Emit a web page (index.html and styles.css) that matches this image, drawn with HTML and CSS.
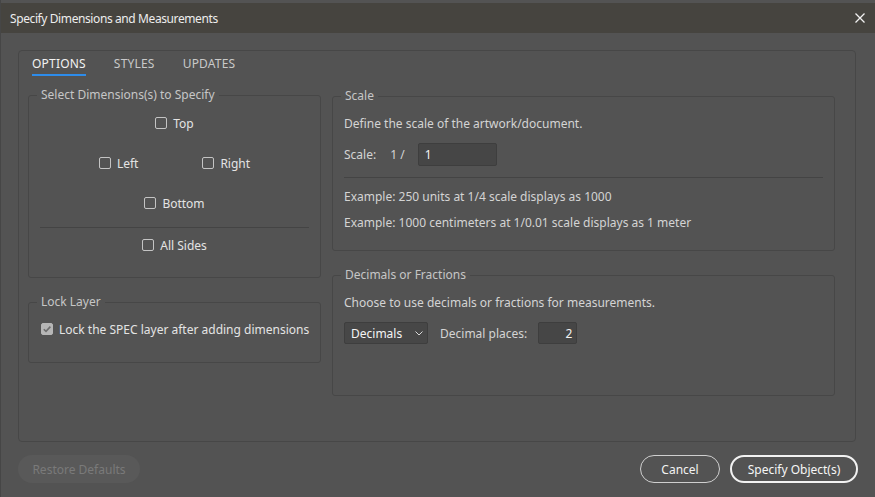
FILE: index.html
```html
<!DOCTYPE html>
<html>
<head>
<meta charset="utf-8">
<link rel="stylesheet" href="styles.css">
</head>
<body>
<div class="window">
  <div class="titlebar">
    <span class="title">Specify Dimensions and Measurements</span>
    <svg class="close" width="10" height="10" viewBox="0 0 10 10"><path d="M0.5 0.5 L9.5 9.5 M9.5 0.5 L0.5 9.5" stroke="#f2f2f2" stroke-width="1.3" fill="none"/></svg>
  </div>
  <div class="panel">
    <div class="tabs">
      <span class="tab active">OPTIONS</span>
      <span class="tab">STYLES</span>
      <span class="tab">UPDATES</span>
    </div>
    <div class="columns">
      <div class="col">
        <div class="group dims">
          <div class="legend">Select Dimensions(s) to Specify</div>
          <div class="row"><label class="cb"><span class="box"></span>Top</label></div>
          <div class="row lr"><label class="cb"><span class="box"></span>Left</label><label class="cb"><span class="box"></span>Right</label></div>
          <div class="row"><label class="cb"><span class="box"></span>Bottom</label></div>
          <div class="sep"></div>
          <div class="row all"><label class="cb"><span class="box"></span>All Sides</label></div>
        </div>
        <div class="group lock">
          <div class="legend">Lock Layer</div>
          <div class="lockrow"><label class="cb"><span class="box checked"><svg width="10" height="10" viewBox="0 0 10 10"><path d="M1.8 5.2 L4 7.4 L8.4 2.6" stroke="#6e6e6e" stroke-width="1.6" fill="none"/></svg></span>Lock the SPEC layer after adding dimensions</label></div>
        </div>
      </div>
      <div class="col right">
        <div class="group scale">
          <div class="legend">Scale</div>
          <div class="line first">Define the scale of the artwork/document.</div>
          <div class="scalerow"><span>Scale:</span><span class="frac">1 /</span><span class="input wide">1</span></div>
          <div class="sep"></div>
          <div class="line ex1">Example: 250 units at 1/4 scale displays as 1000</div>
          <div class="line ex2">Example: 1000 centimeters at 1/0.01 scale displays as 1 meter</div>
        </div>
        <div class="group decimals">
          <div class="legend">Decimals or Fractions</div>
          <div class="line first">Choose to use decimals or fractions for measurements.</div>
          <div class="decrow">
            <span class="select">Decimals<svg width="8" height="5" viewBox="0 0 8 5"><path d="M0.5 0.5 L4 4 L7.5 0.5" stroke="#d8d8d8" stroke-width="1" fill="none"/></svg></span>
            <span class="dlabel">Decimal places:</span>
            <span class="input narrow">2</span>
          </div>
        </div>
      </div>
    </div>
  </div>
  <div class="footer">
    <span class="btn restore">Restore Defaults</span>
    <span class="spacer"></span>
    <span class="btn cancel">Cancel</span>
    <span class="btn primary">Specify Object(s)</span>
  </div>
</div>
</body>
</html>
```
FILE: styles.css
```css
* { box-sizing: border-box; }
html, body { margin: 0; padding: 0; }
body {
  background: #535353;
  font-family: "Noto Sans", "Open Sans", sans-serif;
  font-size: 12px;
  color: #d4d4d4;
}
.window {
  width: 875px;
  height: 497px;
  border-left: 1px solid #464646;
  padding-top: 3px;
  background: #535353;
}
.titlebar {
  height: 30px;
  background: #46443f;
  display: flex;
  align-items: center;
  padding: 0 10px 0 9px;
}
.title {
  color: #ededed;
  font-size: 12px;
  letter-spacing: -0.4px;
  flex: 1;
}
.close { display: block; }
.panel {
  margin: 17px 19px 0 17px;
  height: 392px;
  border: 1px solid #474747;
  border-radius: 4px;
  padding: 0 20px 0 9px;
}
.tabs {
  display: flex;
  gap: 28px;
  margin-top: 5px;
  padding-left: 4px;
}
.tab {
  line-height: 16px;
  padding-bottom: 2px;
  border-bottom: 2px solid transparent;
  color: #c9c9c9;
  letter-spacing: 0.2px;
}
.tab.active {
  color: #f2f2f2;
  border-bottom-color: #2d8ceb;
}
.columns {
  display: grid;
  grid-template-columns: 293px 503px;
  column-gap: 11px;
  margin-top: 19px;
}
.col.right { padding-top: 1px; }
.group {
  border: 1px solid #474747;
  border-radius: 3px;
}
.legend {
  width: fit-content;
  margin: -9px 0 0 8px;
  padding: 0 4px;
  line-height: 16px;
  background: #535353;
  color: #c6c6c6;
}
.row {
  height: 40px;
  display: flex;
  align-items: center;
  justify-content: center;
}
.row.lr { gap: 64px; }
.row.all { height: 34px; }
.dims { padding-bottom: 15px; }
.sep {
  height: 1px;
  background: #444444;
  margin: 4px 11px 0;
}
.cb {
  display: flex;
  align-items: center;
  gap: 6px;
  color: #e4e4e4;
}
.box {
  width: 12px;
  height: 12px;
  border: 1px solid #c4c4c4;
  border-radius: 2px;
  display: flex;
  align-items: center;
  justify-content: center;
}
.box.checked {
  background: #b6b6b6;
  border-color: #b6b6b6;
}
.lock { margin-top: 24px; padding: 0 0 22px 12px; }
.lock .legend { margin-left: -4px; }
.lockrow { margin-top: 8px; height: 22px; display: flex; align-items: center; }
.scale, .decimals { padding: 0 11px; }
.scale .legend, .decimals .legend { margin-left: -3px; }
.line { line-height: 20px; }
.line.first { margin-top: 10px; }
.scalerow {
  margin-top: 8px;
  height: 24px;
  display: flex;
  align-items: center;
}
.frac { margin-left: 14px; margin-right: 13px; }
.input {
  height: 23px;
  background: #464646;
  border: 1px solid #3e3e3e;
  border-radius: 2px;
  color: #f2f2f2;
  display: flex;
  align-items: center;
}
.input.wide { width: 79px; padding-left: 6px; }
.input.narrow { width: 39px; height: 22px; justify-content: flex-end; padding-right: 4px; }
.scale .sep { margin: 11px 0 0; }
.ex1 { margin-top: 9px; }
.ex2 { margin-top: 6px; }
.scale { padding-bottom: 17px; }
.decimals { margin-top: 24px; padding-bottom: 51px; }
.decrow {
  margin-top: 9px;
  display: flex;
  align-items: center;
}
.select {
  width: 84px;
  height: 22px;
  background: #474747;
  border: 1px solid #3e3e3e;
  border-radius: 2px;
  color: #f4f4f4;
  display: flex;
  align-items: center;
  justify-content: space-between;
  padding: 0 4px 0 6px;
}
.dlabel { margin-left: 12px; margin-right: 11px; }
.footer {
  display: flex;
  align-items: center;
  margin-top: 13px;
  padding: 0 17px 0 17px;
  gap: 10px;
}
.spacer { flex: 1; }
.btn {
  height: 28px;
  border-radius: 14px;
  display: flex;
  align-items: center;
  justify-content: center;
}
.restore {
  width: 122px;
  background: #595959;
  color: #7a7a7a;
}
.cancel {
  width: 80px;
  border: 1px solid #cfcfcf;
  color: #f2f2f2;
}
.primary {
  width: 128px;
  border: 2px solid #f2f2f2;
  color: #f6f6f6;
}
```
